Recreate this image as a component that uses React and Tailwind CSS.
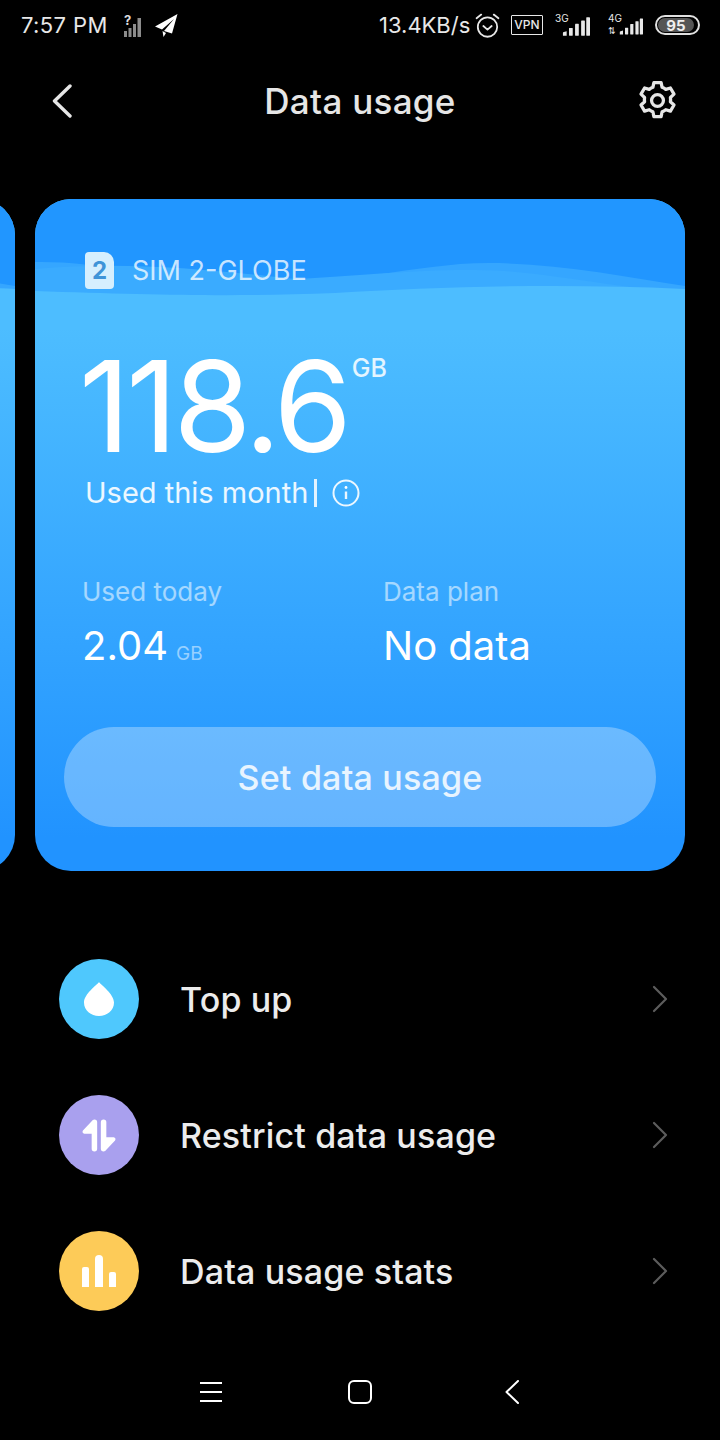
import React from 'react';

const Signal = ({ className, color = 'white' }) => (
  <svg viewBox="0 0 30 20" className={className} fill={color}>
    <path d="M1 20 L1 17 Q1 16 2 16 L5 15 L5 20 Z" />
    <rect x="7.5" y="11.5" width="4" height="8.5" rx="0.5" />
    <rect x="14" y="7" width="4" height="13" rx="0.5" />
    <rect x="20.5" y="3.5" width="4" height="16.5" rx="0.5" />
    <rect x="26" y="0" width="4" height="20" rx="0.5" />
  </svg>
);

const StatusBar = () => (
  <div className="flex h-[48px] items-center justify-between pl-[21px] pr-[20px] pt-[2px] text-[22px] text-[#e8e8e8]">
    <div className="flex items-center">
      <span className="w-[86px] whitespace-nowrap tracking-[0.4px]">7:57 PM</span>
      {/* no sim signal */}
      <div className="relative ml-[16px] h-[24px] w-[20px]">
        <span className="absolute left-[1px] top-[-2px] text-[13px] font-bold leading-[18px] text-[#ddd]">?</span>
        <svg viewBox="0 0 20 20" className="absolute bottom-0 left-0 h-[20px] w-[20px]" fill="#8c8c8c">
          <rect x="1" y="14" width="3" height="6" />
          <rect x="5.5" y="11" width="3" height="9" />
          <rect x="10" y="7" width="3" height="13" />
          <rect x="14.5" y="1" width="3.5" height="19" />
        </svg>
      </div>
      {/* telegram plane */}
      <svg viewBox="0 0 24 24" className="ml-[11px] h-[24px] w-[24px]" fill="#fff">
        <path d="M23.5 1 L1 13.5 L8 16.5 L20 6 L10 18 L18 20.5 Z" />
        <path d="M8.5 18 L9.5 24 L12 20 Z" />
      </svg>
    </div>
    <div className="flex items-center">
      <span className="w-[91px] whitespace-nowrap">13.4KB/s</span>
      <svg viewBox="0 0 24 24" className="ml-[5px] h-[25px] w-[25px]" fill="none" stroke="#e8e8e8" strokeWidth="1.7" strokeLinecap="round" strokeLinejoin="round">
        <circle cx="12" cy="13.5" r="9.3" />
        <path d="M8 12.5 L12 16 L16 12.5" />
        <path d="M1.5 5 L6 1.5" />
        <path d="M22.5 5 L18 1.5" />
      </svg>
      <div className="ml-[11px] flex h-[20px] w-[32px] items-center justify-center rounded-[1px] border-[1.5px] border-[#e8e8e8] text-[12px] font-medium leading-none">
        VPN
      </div>
      <div className="relative ml-[12px] h-[24px] w-[35px]">
        <span className="absolute left-0 top-[-3px] text-[10px] leading-[16px]">3G</span>
        <Signal className="absolute bottom-[1px] right-0 h-[19px] w-[28px]" color="#e8e8e8" />
      </div>
      <div className="relative ml-[18px] h-[24px] w-[35px]">
        <span className="absolute left-0 top-[-3px] text-[10px] leading-[16px]">4G</span>
        <span className="absolute bottom-[1px] left-0 text-[9px] leading-[10px]">⇅</span>
        <Signal className="absolute bottom-[1px] right-0 h-[19px] w-[24px]" color="#e8e8e8" />
      </div>
      <div className="ml-[12px] flex h-[20px] w-[45px] items-center rounded-full border-2 border-[#e0e0e0] p-[1px]">
        <div className="flex h-full w-[36px] items-center justify-center rounded-full bg-[#555] text-[15px] font-bold leading-none text-[#eee]">
          95
        </div>
      </div>
    </div>
  </div>
);

const Header = () => (
  <div className="relative flex h-[106px] items-center justify-center text-[35px] font-medium tracking-[0.3px] text-[#e6e6e6]">
    <svg viewBox="0 0 20 34" className="absolute left-[52px] top-[36px] h-[34px] w-[20px]" fill="none" stroke="#e6e6e6" strokeWidth="3.4" strokeLinecap="round" strokeLinejoin="round">
      <path d="M18 2 L2.5 17 L18 32" />
    </svg>
    <span className="leading-none">Data usage</span>
    <svg viewBox="0 0 40 40" className="absolute right-[42px] top-[32px] h-[41px] w-[41px]" fill="none" stroke="#e6e6e6" strokeWidth="3.2" strokeLinejoin="round">
      <path d="M16.5 2.5 h7 l1 4.6 a13.5 13.5 0 0 1 3.6 2.1 l4.5 -1.4 l3.5 6 l-3.5 3.2 a13.5 13.5 0 0 1 0 4.2 l3.5 3.2 l-3.5 6 l-4.5 -1.4 a13.5 13.5 0 0 1 -3.6 2.1 l-1 4.6 h-7 l-1 -4.6 a13.5 13.5 0 0 1 -3.6 -2.1 l-4.5 1.4 l-3.5 -6 l3.5 -3.2 a13.5 13.5 0 0 1 0 -4.2 l-3.5 -3.2 l3.5 -6 l4.5 1.4 a13.5 13.5 0 0 1 3.6 -2.1 z" />
      <circle cx="20" cy="20" r="5.8" />
    </svg>
  </div>
);

const Waves = () => (
  <svg viewBox="0 0 650 130" preserveAspectRatio="none" className="absolute left-0 top-0 h-[130px] w-[650px]">
    <path d="M0 63 C60 62 110 76 170 90 C240 98 330 74 425 65 C500 60 580 76 650 87 L650 130 L0 130 Z" fill="#35a6ff" />
    <path d="M0 70 C90 62 170 70 260 80 C340 76 400 68 470 72 C540 78 600 92 650 92 L650 130 L0 130 Z" fill="#3aabff" />
    <path d="M0 92 C120 96 200 98 300 94 C400 88 520 84 650 90 L650 130 L0 130 Z" fill="#4dbdff" />
  </svg>
);

const Card = ({ children }) => (
  <div className="relative h-[672px] w-[650px] shrink-0 overflow-hidden rounded-[36px] bg-gradient-to-b from-[#4dbdff] from-[19%] to-[#2193ff] to-[95%] text-white">
    <div className="absolute inset-x-0 top-0 h-[130px] bg-[#2196ff]" />
    <Waves />
    {children}
  </div>
);

const Chevron = () => (
  <svg viewBox="0 0 16 28" className="h-[28px] w-[16px]" fill="none" stroke="#5c5c5c" strokeWidth="2.2" strokeLinecap="round" strokeLinejoin="round">
    <path d="M2 2 L14 14 L2 26" />
  </svg>
);

const Row = ({ color, label, children }) => (
  <div className="flex h-[136px] items-center pl-[59px] pr-[52px]">
    <div className={`flex h-[80px] w-[80px] items-center justify-center rounded-full ${color}`}>
      {children}
    </div>
    <span className="ml-[41px] flex-1 pt-[1px] text-[34px] font-medium tracking-[0.15px] text-[#ececec]">{label}</span>
    <Chevron />
  </div>
);

export default function App() {
  return (
    <div className="flex h-[1440px] w-[720px] flex-col overflow-hidden bg-black font-['Inter',sans-serif]">
      <StatusBar />
      <Header />
      <div className="mt-[45px] flex gap-[20px] pl-[35px]">
        <div className="ml-[-670px] shrink-0">
          <Card />
        </div>
        <Card>
          <div className="relative flex h-full flex-col">
            <div className="flex items-center pl-[50px] pt-[53px]">
              <div className="flex h-[37px] w-[29px] items-center justify-center rounded-[4px] rounded-tr-[10px] bg-[#d5effe] text-[24px] font-bold leading-none text-[#3f94d8]">
                2
              </div>
              <span className="ml-[18px] text-[27px] leading-[37px] text-white/75">SIM 2-GLOBE</span>
            </div>
            <div className="mt-[62px] flex items-start pl-[44px]">
              <span className="text-[126px] font-normal leading-[110px] tracking-[-4px]">118.6</span>
              <span className="ml-[4px] mt-[2px] text-[25px] font-medium leading-[30px] text-white/85">GB</span>
            </div>
            <div className="mt-[12px] flex items-center pl-[50px] text-[29px] leading-[40px] text-white/90">
              <span>Used this month</span>
              <span className="ml-[6px] h-[28px] w-[3px] bg-white/85" />
              <svg viewBox="0 0 28 28" className="ml-[15px] h-[28px] w-[28px]" fill="none" stroke="#fff" strokeOpacity="0.9" strokeWidth="2">
                <circle cx="14" cy="14" r="12.5" />
                <path d="M14 12.5 V20" strokeWidth="2.4" />
                <circle cx="14" cy="8.5" r="1.4" fill="#fff" stroke="none" />
              </svg>
            </div>
            <div className="mt-[61px] flex pl-[47px]">
              <div className="w-[301px]">
                <div className="text-[26px] leading-[36px] text-white/55">Used today</div>
                <div className="mt-[11px] flex items-baseline leading-[50px]">
                  <span className="text-[40px]">2.04</span>
                  <span className="ml-[8px] text-[19px] text-white/50">GB</span>
                </div>
              </div>
              <div>
                <div className="text-[26px] leading-[36px] text-white/55">Data plan</div>
                <div className="mt-[11px] text-[40px] leading-[50px]">No data</div>
              </div>
            </div>
            <div className="mx-[29px] mt-[48px] flex h-[100px] items-center justify-center rounded-full bg-white/30 text-[34px] font-medium tracking-[0.2px] text-white/85">
              Set data usage
            </div>
          </div>
        </Card>
      </div>
      <div className="mt-[60px] flex flex-col">
        <Row color="bg-[#4fc8fd]" label="Top up">
          <svg viewBox="0 0 32 36" className="h-[36px] w-[32px]" fill="#fff">
            <path d="M16 1 C18 4 31 13 31 21.5 C31 29.5 24 35 16 35 C8 35 1 29.5 1 21.5 C1 13 14 4 16 1 Z" />
          </svg>
        </Row>
        <Row color="bg-[#a9a0ee]" label="Restrict data usage">
          <svg viewBox="0 0 38 36" className="h-[33px] w-[36px]" fill="#fff">
            <path d="M11 2.5 Q12 0.5 14 0.5 Q17 0.5 17 3.5 V32.5 Q17 35.5 14 35.5 Q11 35.5 11 32.5 V16 H3 Q0 15 1.5 12.5 Z" />
            <path d="M27 33.5 Q26 35.5 24 35.5 Q21 35.5 21 32.5 V3.5 Q21 0.5 24 0.5 Q27 0.5 27 3.5 V20 H35 Q38 21 36.5 23.5 Z" />
          </svg>
        </Row>
        <Row color="bg-[#fdcb58]" label="Data usage stats">
          <div className="flex items-end gap-[6px]">
            <div className="h-[20px] w-[7px] rounded-t-[2px] bg-white" />
            <div className="h-[32px] w-[8px] rounded-t-[4px] bg-white" />
            <div className="h-[15px] w-[7px] rounded-t-[2px] bg-white" />
          </div>
        </Row>
      </div>
      {/* nav bar */}
      <div className="mt-[41px] flex items-center pl-[200px]">
        <div className="flex w-[22px] flex-col gap-[7px]">
          <div className="h-[2px] bg-white" />
          <div className="h-[2px] bg-white" />
          <div className="h-[2px] bg-white" />
        </div>
        <div className="ml-[126px] h-[24px] w-[24px] rounded-[6px] border-2 border-white" />
        <svg viewBox="0 0 14 24" className="ml-[133px] h-[24px] w-[14px]" fill="none" stroke="#fff" strokeWidth="2" strokeLinecap="round" strokeLinejoin="round">
          <path d="M13 1 L1.5 12 L13 23" />
        </svg>
      </div>
    </div>
  );
}
